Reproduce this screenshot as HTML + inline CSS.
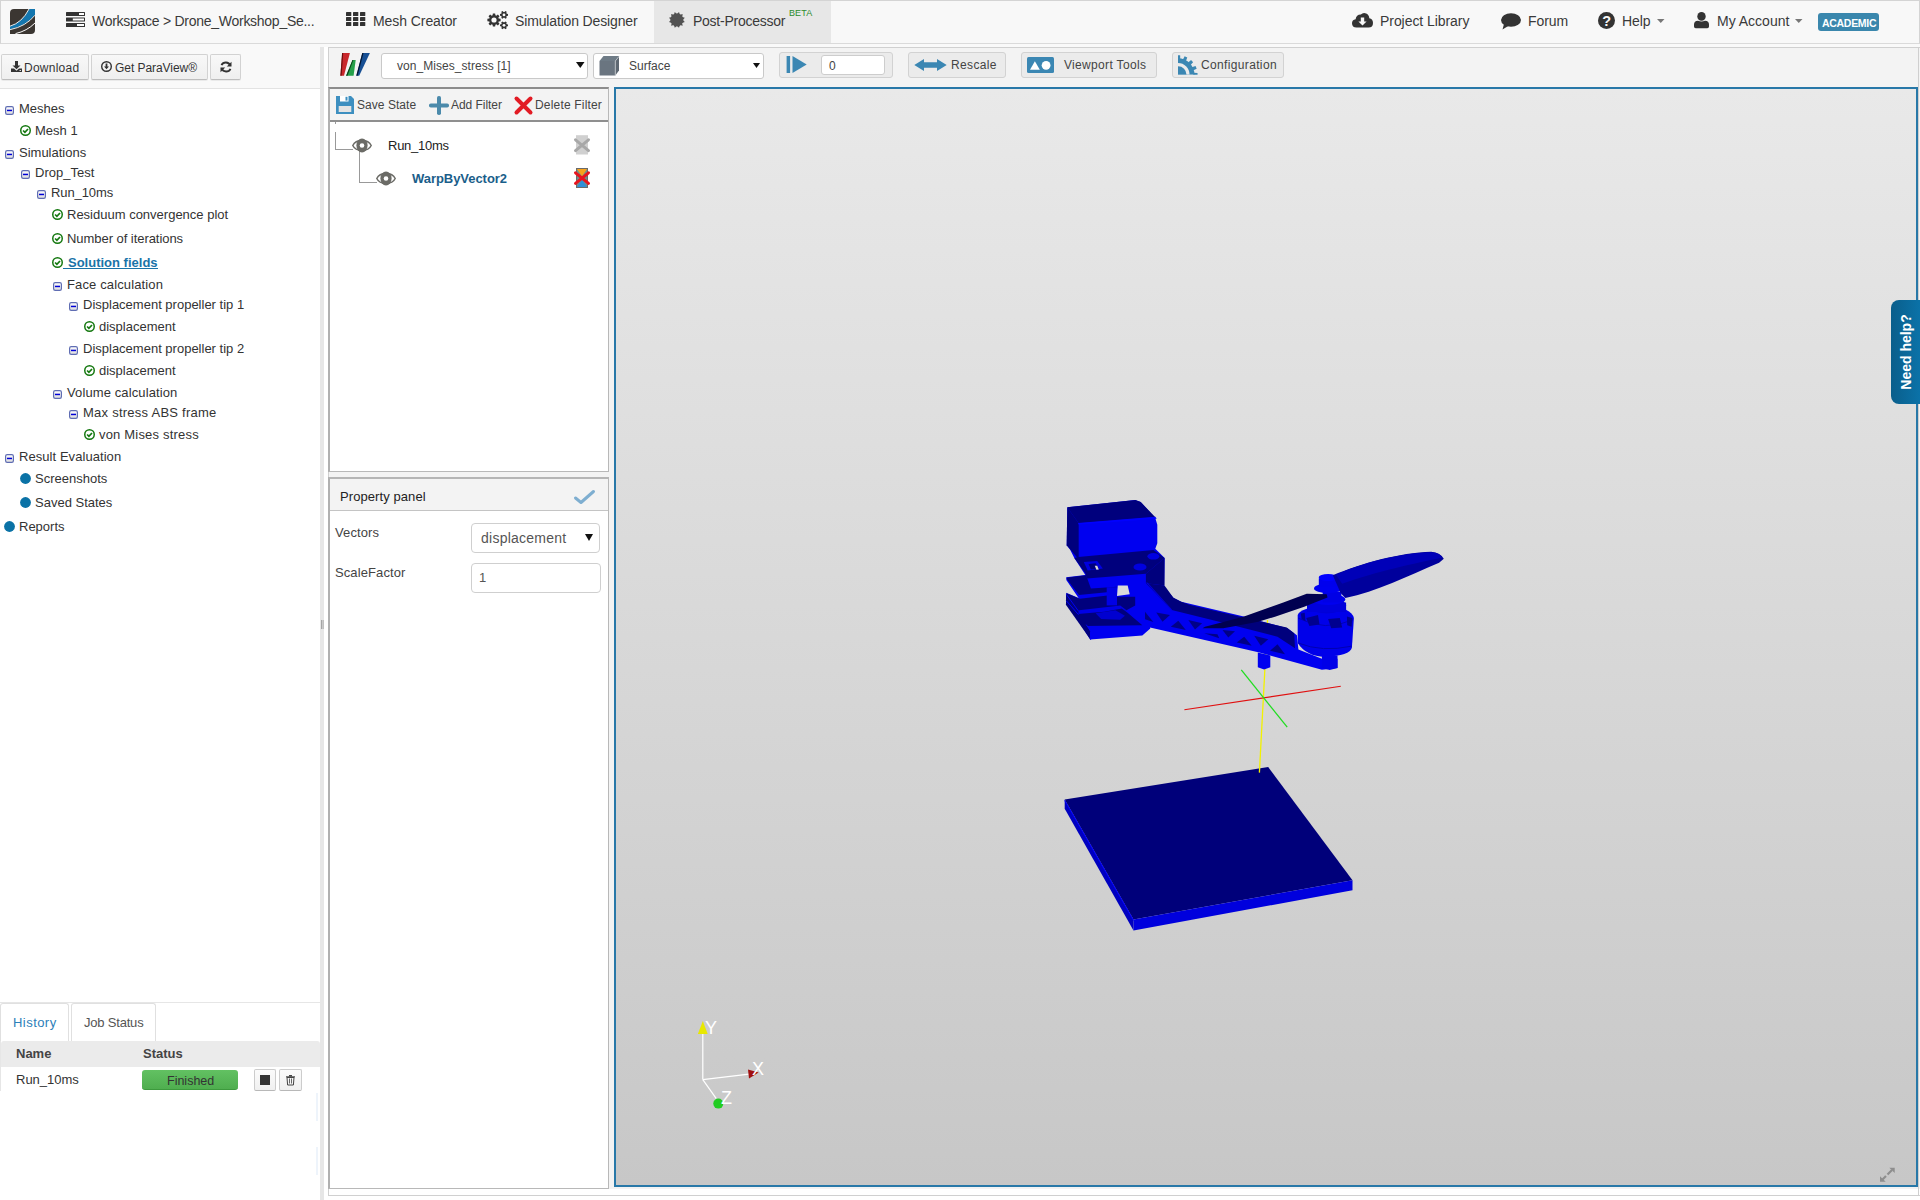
<!DOCTYPE html><html><head><meta charset="utf-8"><style>
html,body{margin:0;padding:0;width:1920px;height:1200px;overflow:hidden;background:#fff;font-family:'Liberation Sans', sans-serif;}
.t{position:absolute;white-space:nowrap;line-height:20px;font-family:'Liberation Sans', sans-serif;}
svg{overflow:visible}
</style></head><body>
<div style="position:absolute;left:0px;top:0px;width:1920px;height:44px;background:#f8f8f8;border-top:1px solid #d4d4d4;border-bottom:1px solid #dadada;border-left:1px solid #d4d4d4;border-right:1px solid #d4d4d4;box-sizing:border-box"></div>
<div style="position:absolute;left:0px;top:44px;width:1920px;height:3px;background:#f9f9f9"></div>
<div style="position:absolute;left:654px;top:1px;width:177px;height:42px;background:#e7e7e7"></div>
<svg style="position:absolute;left:10px;top:9px;" width="25" height="25" viewBox="0 0 25 25"><path d="M4 0 H25 V21 Q25 25 21 25 H0 V4 Q0 0 4 0 Z" fill="#3b3632"/>
<path d="M0 17.5 Q12 14 19.3 0 H25 V5.8 Q16 17 0 20.3 Z" fill="#1476ae"/>
<path d="M0 17.2 Q12 13.7 19.0 0" stroke="#fff" stroke-width="0.9" fill="none"/>
<path d="M0 20.7 Q16 17.4 25 6.2" stroke="#fff" stroke-width="0.9" fill="none"/>
<path d="M5.5 24.6 Q17 22 25 14" stroke="#fff" stroke-width="1" fill="none"/></svg>
<svg style="position:absolute;left:66px;top:12px;" width="19" height="15" viewBox="0 0 19 15"><rect x="0" y="0" width="19" height="4" rx="0.5" fill="#333"/><rect x="13" y="1" width="5" height="2" fill="#fff"/>
<rect x="0" y="5.5" width="19" height="4" rx="0.5" fill="#333"/><rect x="6.8" y="6.5" width="11.2" height="2" fill="#fff"/>
<rect x="0" y="11" width="19" height="4" rx="0.5" fill="#333"/><rect x="11" y="12" width="7" height="2" fill="#fff"/></svg>
<div class="t" style="left:92px;top:11px;font-size:14px;color:#3a3a3a;font-weight:normal;letter-spacing:-0.27px;">Workspace &gt; Drone_Workshop_Se...</div>
<svg style="position:absolute;left:346px;top:12px;" width="19" height="15" viewBox="0 0 19 15"><rect x="0" y="0" width="5.3" height="4" rx="0.6" fill="#333"/><rect x="7" y="0" width="5.3" height="4" rx="0.6" fill="#333"/><rect x="14" y="0" width="5.3" height="4" rx="0.6" fill="#333"/><rect x="0" y="5" width="5.3" height="4" rx="0.6" fill="#333"/><rect x="7" y="5" width="5.3" height="4" rx="0.6" fill="#333"/><rect x="14" y="5" width="5.3" height="4" rx="0.6" fill="#333"/><rect x="0" y="10" width="5.3" height="4" rx="0.6" fill="#333"/><rect x="7" y="10" width="5.3" height="4" rx="0.6" fill="#333"/><rect x="14" y="10" width="5.3" height="4" rx="0.6" fill="#333"/></svg>
<div class="t" style="left:373px;top:11px;font-size:14px;color:#3a3a3a;font-weight:normal;letter-spacing:-0.07px;">Mesh Creator</div>
<svg style="position:absolute;left:487px;top:11px;" width="22" height="18" viewBox="0 0 22 18"><polygon points="11.69,7.58 13.60,7.86 13.60,10.14 11.69,10.42 11.32,11.31 12.48,12.86 10.86,14.48 9.31,13.32 8.42,13.69 8.14,15.60 5.86,15.60 5.58,13.69 4.69,13.32 3.14,14.48 1.52,12.86 2.68,11.31 2.31,10.42 0.40,10.14 0.40,7.86 2.31,7.58 2.68,6.69 1.52,5.14 3.14,3.52 4.69,4.68 5.58,4.31 5.86,2.40 8.14,2.40 8.42,4.31 9.31,4.68 10.86,3.52 12.48,5.14 11.32,6.69" fill="#333"/><circle cx="7" cy="9" r="2.6" fill="#f8f8f8"/><polygon points="19.81,2.86 21.01,3.06 21.01,4.74 19.81,4.94 19.31,5.82 19.74,6.95 18.28,7.80 17.51,6.86 16.49,6.86 15.72,7.80 14.26,6.95 14.69,5.82 14.19,4.94 12.99,4.74 12.99,3.06 14.19,2.86 14.69,1.98 14.26,0.85 15.72,0.00 16.49,0.94 17.51,0.94 18.28,0.00 19.74,0.85 19.31,1.98" fill="#333"/><circle cx="17" cy="3.9" r="1.4" fill="#f8f8f8"/><polygon points="19.81,13.26 21.01,13.46 21.01,15.14 19.81,15.34 19.31,16.22 19.74,17.35 18.28,18.20 17.51,17.26 16.49,17.26 15.72,18.20 14.26,17.35 14.69,16.22 14.19,15.34 12.99,15.14 12.99,13.46 14.19,13.26 14.69,12.38 14.26,11.25 15.72,10.40 16.49,11.34 17.51,11.34 18.28,10.40 19.74,11.25 19.31,12.38" fill="#333"/><circle cx="17" cy="14.3" r="1.4" fill="#f8f8f8"/></svg>
<div class="t" style="left:515px;top:11px;font-size:14px;color:#3a3a3a;font-weight:normal;letter-spacing:-0.15px;">Simulation Designer</div>
<svg style="position:absolute;left:668px;top:12px;" width="17" height="16" viewBox="0 0 17 16"><polygon points="14.90,7.90 16.82,10.02 14.10,10.90 14.70,13.70 11.90,13.10 11.02,15.82 8.90,13.90 6.78,15.82 5.90,13.10 3.10,13.70 3.70,10.90 0.98,10.02 2.90,7.90 0.98,5.78 3.70,4.90 3.10,2.10 5.90,2.70 6.78,-0.02 8.90,1.90 11.02,-0.02 11.90,2.70 14.70,2.10 14.10,4.90 16.82,5.78" fill="#525252"/><circle cx="8.9" cy="7.9" r="6.4" fill="#525252"/></svg>
<div class="t" style="left:693px;top:11px;font-size:14px;color:#3a3a3a;font-weight:normal;letter-spacing:-0.25px;">Post-Processor</div>
<div class="t" style="left:789px;top:3px;font-size:9px;color:#2c8c2c;font-weight:normal;letter-spacing:0.1px;">BETA</div>
<svg style="position:absolute;left:1352px;top:12px;" width="21" height="16" viewBox="0 0 21 16"><path d="M4.5 15.5 Q0 15.5 0 11.3 Q0 7.6 3.6 7.2 Q4.2 2.6 8.8 2.4 Q11.2 0 14.2 1.4 Q17.2 2.8 17.3 6.2 Q21 7 21 11 Q21 15.5 16.5 15.5 Z" fill="#333"/>
<path d="M8.8 5.5 H12.2 V9.5 H14.6 L10.5 13.6 L6.4 9.5 H8.8 Z" fill="#f8f8f8"/></svg>
<div class="t" style="left:1380px;top:11px;font-size:14px;color:#3a3a3a;font-weight:normal;letter-spacing:-0.06px;">Project Library</div>
<svg style="position:absolute;left:1501px;top:13px;" width="20" height="17" viewBox="0 0 20 17"><ellipse cx="10" cy="7" rx="10" ry="6.8" fill="#333"/><path d="M3 11 L1.5 16.5 L8 12.5 Z" fill="#333"/></svg>
<div class="t" style="left:1528px;top:11px;font-size:14px;color:#3a3a3a;font-weight:normal;letter-spacing:-0.1px;">Forum</div>
<svg style="position:absolute;left:1598px;top:12px;" width="17" height="17" viewBox="0 0 17 17"><circle cx="8.5" cy="8.5" r="8.5" fill="#333"/><text x="8.6" y="13.6" text-anchor="middle" font-family="Liberation Sans" font-weight="bold" font-size="14.5" fill="#f8f8f8">?</text></svg>
<div class="t" style="left:1622px;top:11px;font-size:14px;color:#3a3a3a;font-weight:normal;letter-spacing:-0.1px;">Help</div>
<svg style="position:absolute;left:1657px;top:19px;" width="8" height="4" viewBox="0 0 8 4"><path d="M0 0 H7.5 L3.75 4 Z" fill="#777"/></svg>
<svg style="position:absolute;left:1694px;top:12px;" width="15" height="17" viewBox="0 0 15 17"><ellipse cx="7.5" cy="4.4" rx="4.2" ry="4.4" fill="#333"/><path d="M0 14.5 V12.5 Q0 9 4 8.8 Q7.5 10.2 11 8.8 Q15 9 15 12.5 V14.5 Q15 16.2 13.3 16.2 H1.7 Q0 16.2 0 14.5 Z" fill="#333"/></svg>
<div class="t" style="left:1717px;top:11px;font-size:14px;color:#3a3a3a;font-weight:normal;letter-spacing:0px;">My Account</div>
<svg style="position:absolute;left:1795px;top:19px;" width="8" height="4" viewBox="0 0 8 4"><path d="M0 0 H7.5 L3.75 4 Z" fill="#777"/></svg>
<div style="position:absolute;left:1818px;top:13px;width:61px;height:18px;background:#3a87ad;border-radius:3px"></div>
<div class="t" style="left:1822px;top:13px;font-size:10.5px;color:#fff;font-weight:bold;letter-spacing:-0.3px;">ACADEMIC</div>
<div style="position:absolute;left:0px;top:44px;width:320px;height:45px;background:#f9f9f9;border-bottom:1px solid #e3e3e3;box-sizing:border-box"></div>
<div style="position:absolute;left:1px;top:54px;width:88px;height:26px;background:linear-gradient(#f8f8f8,#efefef);border:1px solid #d2d2d2;border-bottom-color:#bdbdbd;border-radius:2px;box-sizing:border-box;box-shadow:0 1px 0 rgba(0,0,0,0.06)"></div>
<div style="position:absolute;left:91px;top:54px;width:117px;height:26px;background:linear-gradient(#f8f8f8,#efefef);border:1px solid #d2d2d2;border-bottom-color:#bdbdbd;border-radius:2px;box-sizing:border-box;box-shadow:0 1px 0 rgba(0,0,0,0.06)"></div>
<div style="position:absolute;left:210px;top:54px;width:31px;height:26px;background:linear-gradient(#f8f8f8,#efefef);border:1px solid #d2d2d2;border-bottom-color:#bdbdbd;border-radius:2px;box-sizing:border-box;box-shadow:0 1px 0 rgba(0,0,0,0.06)"></div>
<svg style="position:absolute;left:11px;top:61px;" width="11" height="11" viewBox="0 0 11 11"><path d="M4 0 H7 V4.5 H9.5 L5.5 8.2 L1.5 4.5 H4 Z" fill="#333"/><path d="M0 7.5 H3 L5.5 9.8 L8 7.5 H11 V11 H0 Z" fill="#333"/><rect x="8.5" y="9" width="1.5" height="1" fill="#ddd"/></svg>
<div class="t" style="left:24px;top:58px;font-size:12px;color:#333;font-weight:normal;letter-spacing:0.25px;">Download</div>
<svg style="position:absolute;left:101px;top:61px;" width="11" height="11" viewBox="0 0 11 11"><circle cx="5.5" cy="5.5" r="4.8" fill="none" stroke="#333" stroke-width="1.4"/><path d="M4.6 2.5 H6.4 V5.5 H8 L5.5 8.3 L3 5.5 H4.6 Z" fill="#333"/></svg>
<div class="t" style="left:115px;top:58px;font-size:12px;color:#333;font-weight:normal;letter-spacing:-0.05px;">Get ParaView®</div>
<svg style="position:absolute;left:220px;top:61px;" width="12" height="12" viewBox="0 0 12 12"><path d="M10.3 4.5 A4.8 4.8 0 0 0 1.5 4.2" stroke="#333" stroke-width="1.9" fill="none"/><path d="M11.5 0.8 V5.5 H6.8 Z" fill="#333"/>
<path d="M1.7 7.5 A4.8 4.8 0 0 0 10.5 7.8" stroke="#333" stroke-width="1.9" fill="none"/><path d="M0.5 11.2 V6.5 H5.2 Z" fill="#333"/></svg>
<svg width="0" height="0" style="position:absolute"><defs><linearGradient id="mg" x1="0" y1="0" x2="0" y2="1"><stop offset="0" stop-color="#fff"/><stop offset="1" stop-color="#dcdcdc"/></linearGradient></defs></svg>
<svg style="position:absolute;left:5px;top:106px;" width="9" height="9" viewBox="0 0 9 9"><rect x="0.6" y="0.6" width="7.8" height="7.8" rx="1.6" fill="url(#mg)" stroke="#5f6db3" stroke-width="1.2"/><rect x="2" y="3.7" width="5" height="1.5" fill="#0000d8"/></svg>
<div class="t" style="left:19px;top:99px;font-size:13px;color:#333;font-weight:normal;">Meshes</div>
<svg style="position:absolute;left:20px;top:125px;" width="11" height="11" viewBox="0 0 11 11"><circle cx="5.5" cy="5.5" r="4.75" fill="#fff" stroke="#14780f" stroke-width="1.5"/><path d="M3.1 5.5 L4.9 7.3 L8.0 4.0" fill="none" stroke="#14780f" stroke-width="1.7"/></svg>
<div class="t" style="left:35px;top:121px;font-size:13px;color:#333;font-weight:normal;">Mesh 1</div>
<svg style="position:absolute;left:5px;top:150px;" width="9" height="9" viewBox="0 0 9 9"><rect x="0.6" y="0.6" width="7.8" height="7.8" rx="1.6" fill="url(#mg)" stroke="#5f6db3" stroke-width="1.2"/><rect x="2" y="3.7" width="5" height="1.5" fill="#0000d8"/></svg>
<div class="t" style="left:19px;top:143px;font-size:13px;color:#333;font-weight:normal;">Simulations</div>
<svg style="position:absolute;left:21px;top:170px;" width="9" height="9" viewBox="0 0 9 9"><rect x="0.6" y="0.6" width="7.8" height="7.8" rx="1.6" fill="url(#mg)" stroke="#5f6db3" stroke-width="1.2"/><rect x="2" y="3.7" width="5" height="1.5" fill="#0000d8"/></svg>
<div class="t" style="left:35px;top:163px;font-size:13px;color:#333;font-weight:normal;">Drop_Test</div>
<svg style="position:absolute;left:37px;top:190px;" width="9" height="9" viewBox="0 0 9 9"><rect x="0.6" y="0.6" width="7.8" height="7.8" rx="1.6" fill="url(#mg)" stroke="#5f6db3" stroke-width="1.2"/><rect x="2" y="3.7" width="5" height="1.5" fill="#0000d8"/></svg>
<div class="t" style="left:51px;top:183px;font-size:13px;color:#333;font-weight:normal;letter-spacing:-0.1px;">Run_10ms</div>
<svg style="position:absolute;left:52px;top:209px;" width="11" height="11" viewBox="0 0 11 11"><circle cx="5.5" cy="5.5" r="4.75" fill="#fff" stroke="#14780f" stroke-width="1.5"/><path d="M3.1 5.5 L4.9 7.3 L8.0 4.0" fill="none" stroke="#14780f" stroke-width="1.7"/></svg>
<div class="t" style="left:67px;top:205px;font-size:13px;color:#333;font-weight:normal;">Residuum convergence plot</div>
<svg style="position:absolute;left:52px;top:233px;" width="11" height="11" viewBox="0 0 11 11"><circle cx="5.5" cy="5.5" r="4.75" fill="#fff" stroke="#14780f" stroke-width="1.5"/><path d="M3.1 5.5 L4.9 7.3 L8.0 4.0" fill="none" stroke="#14780f" stroke-width="1.7"/></svg>
<div class="t" style="left:67px;top:229px;font-size:13px;color:#333;font-weight:normal;letter-spacing:-0.05px;">Number of iterations</div>
<svg style="position:absolute;left:52px;top:257px;" width="11" height="11" viewBox="0 0 11 11"><circle cx="5.5" cy="5.5" r="4.75" fill="#fff" stroke="#14780f" stroke-width="1.5"/><path d="M3.1 5.5 L4.9 7.3 L8.0 4.0" fill="none" stroke="#14780f" stroke-width="1.7"/></svg>
<div style="position:absolute;left:63px;top:268px;width:95px;height:1px;background:#1a73a8"></div>
<div class="t" style="left:68px;top:253px;font-size:13px;color:#1a73a8;font-weight:bold;">Solution fields</div>
<svg style="position:absolute;left:53px;top:282px;" width="9" height="9" viewBox="0 0 9 9"><rect x="0.6" y="0.6" width="7.8" height="7.8" rx="1.6" fill="url(#mg)" stroke="#5f6db3" stroke-width="1.2"/><rect x="2" y="3.7" width="5" height="1.5" fill="#0000d8"/></svg>
<div class="t" style="left:67px;top:275px;font-size:13px;color:#333;font-weight:normal;letter-spacing:0.13px;">Face calculation</div>
<svg style="position:absolute;left:69px;top:302px;" width="9" height="9" viewBox="0 0 9 9"><rect x="0.6" y="0.6" width="7.8" height="7.8" rx="1.6" fill="url(#mg)" stroke="#5f6db3" stroke-width="1.2"/><rect x="2" y="3.7" width="5" height="1.5" fill="#0000d8"/></svg>
<div class="t" style="left:83px;top:295px;font-size:13px;color:#333;font-weight:normal;">Displacement propeller tip 1</div>
<svg style="position:absolute;left:84px;top:321px;" width="11" height="11" viewBox="0 0 11 11"><circle cx="5.5" cy="5.5" r="4.75" fill="#fff" stroke="#14780f" stroke-width="1.5"/><path d="M3.1 5.5 L4.9 7.3 L8.0 4.0" fill="none" stroke="#14780f" stroke-width="1.7"/></svg>
<div class="t" style="left:99px;top:317px;font-size:13px;color:#333;font-weight:normal;">displacement</div>
<svg style="position:absolute;left:69px;top:346px;" width="9" height="9" viewBox="0 0 9 9"><rect x="0.6" y="0.6" width="7.8" height="7.8" rx="1.6" fill="url(#mg)" stroke="#5f6db3" stroke-width="1.2"/><rect x="2" y="3.7" width="5" height="1.5" fill="#0000d8"/></svg>
<div class="t" style="left:83px;top:339px;font-size:13px;color:#333;font-weight:normal;">Displacement propeller tip 2</div>
<svg style="position:absolute;left:84px;top:365px;" width="11" height="11" viewBox="0 0 11 11"><circle cx="5.5" cy="5.5" r="4.75" fill="#fff" stroke="#14780f" stroke-width="1.5"/><path d="M3.1 5.5 L4.9 7.3 L8.0 4.0" fill="none" stroke="#14780f" stroke-width="1.7"/></svg>
<div class="t" style="left:99px;top:361px;font-size:13px;color:#333;font-weight:normal;">displacement</div>
<svg style="position:absolute;left:53px;top:390px;" width="9" height="9" viewBox="0 0 9 9"><rect x="0.6" y="0.6" width="7.8" height="7.8" rx="1.6" fill="url(#mg)" stroke="#5f6db3" stroke-width="1.2"/><rect x="2" y="3.7" width="5" height="1.5" fill="#0000d8"/></svg>
<div class="t" style="left:67px;top:383px;font-size:13px;color:#333;font-weight:normal;letter-spacing:0.11px;">Volume calculation</div>
<svg style="position:absolute;left:69px;top:410px;" width="9" height="9" viewBox="0 0 9 9"><rect x="0.6" y="0.6" width="7.8" height="7.8" rx="1.6" fill="url(#mg)" stroke="#5f6db3" stroke-width="1.2"/><rect x="2" y="3.7" width="5" height="1.5" fill="#0000d8"/></svg>
<div class="t" style="left:83px;top:403px;font-size:13px;color:#333;font-weight:normal;letter-spacing:0.25px;">Max stress ABS frame</div>
<svg style="position:absolute;left:84px;top:429px;" width="11" height="11" viewBox="0 0 11 11"><circle cx="5.5" cy="5.5" r="4.75" fill="#fff" stroke="#14780f" stroke-width="1.5"/><path d="M3.1 5.5 L4.9 7.3 L8.0 4.0" fill="none" stroke="#14780f" stroke-width="1.7"/></svg>
<div class="t" style="left:99px;top:425px;font-size:13px;color:#333;font-weight:normal;letter-spacing:0.19px;">von Mises stress</div>
<svg style="position:absolute;left:5px;top:454px;" width="9" height="9" viewBox="0 0 9 9"><rect x="0.6" y="0.6" width="7.8" height="7.8" rx="1.6" fill="url(#mg)" stroke="#5f6db3" stroke-width="1.2"/><rect x="2" y="3.7" width="5" height="1.5" fill="#0000d8"/></svg>
<div class="t" style="left:19px;top:447px;font-size:13px;color:#333;font-weight:normal;letter-spacing:0.06px;">Result Evaluation</div>
<svg style="position:absolute;left:20px;top:473px;" width="11" height="11" viewBox="0 0 11 11"><circle cx="5.5" cy="5.5" r="5.4" fill="#0a72a6"/></svg>
<div class="t" style="left:35px;top:469px;font-size:13px;color:#333;font-weight:normal;">Screenshots</div>
<svg style="position:absolute;left:20px;top:497px;" width="11" height="11" viewBox="0 0 11 11"><circle cx="5.5" cy="5.5" r="5.4" fill="#0a72a6"/></svg>
<div class="t" style="left:35px;top:493px;font-size:13px;color:#333;font-weight:normal;">Saved States</div>
<svg style="position:absolute;left:4px;top:521px;" width="11" height="11" viewBox="0 0 11 11"><circle cx="5.5" cy="5.5" r="5.4" fill="#0a72a6"/></svg>
<div class="t" style="left:19px;top:517px;font-size:13px;color:#333;font-weight:normal;">Reports</div>
<div style="position:absolute;left:320px;top:47px;width:4px;height:1153px;background:#e6e6e6"></div>
<svg style="position:absolute;left:321px;top:620px;" width="3" height="9" viewBox="0 0 3 9"><rect x="0" y="0" width="0.7" height="9" fill="#888"/><rect x="1.7" y="0" width="0.7" height="9" fill="#888"/></svg>
<div style="position:absolute;left:0px;top:1002px;width:320px;height:1px;background:#e6e6e6"></div>
<div style="position:absolute;left:0px;top:1003px;width:69px;height:38px;border:1px solid #e0e0e0;border-bottom:none;border-radius:3px 3px 0 0;box-sizing:border-box;background:#fff"></div>
<div style="position:absolute;left:71px;top:1003px;width:85px;height:38px;border:1px solid #e0e0e0;border-bottom:none;border-radius:3px 3px 0 0;box-sizing:border-box;background:#fff"></div>
<div class="t" style="left:13px;top:1013px;font-size:13px;color:#2c80b9;font-weight:normal;letter-spacing:0.45px;">History</div>
<div class="t" style="left:84px;top:1013px;font-size:13px;color:#555;font-weight:normal;letter-spacing:-0.2px;">Job Status</div>
<div style="position:absolute;left:1px;top:1041px;width:319px;height:26px;background:#ebebeb;border-radius:3px 3px 0 0"></div>
<div style="position:absolute;left:0px;top:1041px;width:1px;height:50px;background:#e6e6e6"></div>
<div class="t" style="left:16px;top:1044px;font-size:13px;color:#444;font-weight:bold;">Name</div>
<div class="t" style="left:143px;top:1044px;font-size:13px;color:#444;font-weight:bold;">Status</div>
<div class="t" style="left:16px;top:1070px;font-size:13px;color:#333;font-weight:normal;">Run_10ms</div>
<div style="position:absolute;left:142px;top:1070px;width:96px;height:20px;background:linear-gradient(#62c162,#4fae4f);border-radius:3px;border-bottom:1px solid #3d9a3d;box-sizing:border-box"></div>
<div class="t" style="left:167px;top:1071px;font-size:12.5px;color:#333;font-weight:normal;">Finished</div>
<div style="position:absolute;left:254px;top:1069px;width:22px;height:22px;background:linear-gradient(#fbfbfb,#f0f0f0);border:1px solid #ccc;border-bottom-color:#b8b8b8;border-radius:2px;box-sizing:border-box"></div>
<div style="position:absolute;left:260px;top:1075px;width:10px;height:10px;background:#333"></div>
<div style="position:absolute;left:279px;top:1069px;width:23px;height:22px;background:linear-gradient(#fbfbfb,#f0f0f0);border:1px solid #ccc;border-bottom-color:#b8b8b8;border-radius:2px;box-sizing:border-box"></div>
<svg style="position:absolute;left:286px;top:1075px;" width="9" height="10" viewBox="0 0 9 10"><rect x="0" y="1.3" width="9" height="1.2" fill="#444"/><rect x="3" y="0" width="3" height="1.5" fill="#444"/><path d="M1 2.5 H8 L7.4 10 H1.6 Z" fill="none" stroke="#444" stroke-width="1"/><rect x="3.2" y="3.5" width="0.8" height="5" fill="#444"/><rect x="5" y="3.5" width="0.8" height="5" fill="#444"/></svg>
<div style="position:absolute;left:316px;top:1093px;width:2px;height:28px;background:#eef4fb"></div>
<div style="position:absolute;left:316px;top:1147px;width:2px;height:28px;background:#eef4fb"></div>
<div style="position:absolute;left:328px;top:47px;width:1592px;height:1149px;border:1px solid #d0d0d0;border-right:none;box-sizing:border-box;background:#fff"></div>
<div style="position:absolute;left:329px;top:48px;width:1591px;height:1141px;background:#f3f3f3"></div>
<div style="position:absolute;left:1918px;top:47px;width:1px;height:1149px;background:#cfcfcf"></div>
<svg style="position:absolute;left:336px;top:48px;" width="40" height="32" viewBox="0 0 40 32"><path d="M6.1 4.9 H13.9 L8 27.7 H4.4 Z" fill="#c9272b"/><path d="M6.1 4.9 L4.4 27.7 H5.6 L7.2 4.9Z" fill="#6a0d0d"/>
<path d="M16.5 12 H19.7 L17.6 27.7 H10.1 Z" fill="#25a04a"/><path d="M16.5 12 L10.1 27.7 H11.5 L17.4 12Z" fill="#0b3d16"/>
<path d="M26.3 4.9 H33.9 L23.2 27.7 H20.3 Z" fill="#174f94"/><path d="M26.3 4.9 L20.3 27.7 H21.6 L27.5 4.9Z" fill="#021530"/></svg>
<div style="position:absolute;left:381px;top:53px;width:207px;height:26px;background:#fff;border:1px solid #c9c9c9;border-radius:3px;box-sizing:border-box"></div>
<div class="t" style="left:397px;top:56px;font-size:12px;color:#444;font-weight:normal;letter-spacing:0.05px;">von_Mises_stress [1]</div>
<svg style="position:absolute;left:576px;top:62px;" width="9" height="6" viewBox="0 0 9 6"><path d="M0 0 H8.5 L4.25 6 Z" fill="#111"/></svg>
<div style="position:absolute;left:593px;top:53px;width:171px;height:26px;background:#fff;border:1px solid #c9c9c9;border-radius:3px;box-sizing:border-box"></div>
<svg style="position:absolute;left:599px;top:56px;" width="20" height="20" viewBox="0 0 20 20"><path d="M0.5 5 L4.5 0 H20 L16.5 5 Z" fill="#6e7b86"/><rect x="0.5" y="5" width="15.8" height="14.5" fill="#6a7580"/><path d="M16.3 5 L20 0 V14.5 L16.3 19.5 Z" fill="#5e6872"/>
<path d="M16.3 5 L20 0.5" stroke="#c8cdd2" stroke-width="0.8"/><path d="M16.3 5 V19.5" stroke="#c8cdd2" stroke-width="0.8"/></svg>
<div class="t" style="left:629px;top:56px;font-size:12px;color:#444;font-weight:normal;">Surface</div>
<svg style="position:absolute;left:753px;top:63px;" width="7" height="5" viewBox="0 0 7 5"><path d="M0 0 H7 L3.5 5 Z" fill="#111"/></svg>
<div style="position:absolute;left:779px;top:52px;width:114px;height:26px;background:#ebebeb;border:1px solid #d2d2d2;border-radius:3px;box-sizing:border-box"></div>
<svg style="position:absolute;left:786px;top:56px;" width="21" height="17" viewBox="0 0 21 17"><rect x="0.6" y="0" width="3.5" height="17" fill="#3b87b3"/><path d="M6.5 0 L20.7 8.5 L6.5 17 Z" fill="#3b87b3"/></svg>
<div style="position:absolute;left:821px;top:55px;width:64px;height:20px;background:#fff;border:1px solid #cdcdcd;border-radius:3px;box-sizing:border-box"></div>
<div class="t" style="left:829px;top:56px;font-size:12px;color:#444;font-weight:normal;">0</div>
<div style="position:absolute;left:908px;top:52px;width:98px;height:26px;background:#ebebeb;border:1px solid #d2d2d2;border-radius:3px;box-sizing:border-box"></div>
<svg style="position:absolute;left:914px;top:59px;" width="33" height="12" viewBox="0 0 33 12"><path d="M0.3 6 L10 0 V3.2 H23 V0 L32.7 6 L23 12 V8.8 H10 V12 Z" fill="#3b87b3"/></svg>
<div class="t" style="left:951px;top:55px;font-size:12px;color:#444;font-weight:normal;letter-spacing:0.35px;">Rescale</div>
<div style="position:absolute;left:1021px;top:52px;width:136px;height:26px;background:#ebebeb;border:1px solid #d2d2d2;border-radius:3px;box-sizing:border-box"></div>
<svg style="position:absolute;left:1027px;top:57px;" width="27" height="16" viewBox="0 0 27 16"><rect x="0" y="0" width="27" height="16" rx="1.5" fill="#3b87b3"/><path d="M3 12.8 L7.9 4.3 L12.8 12.8 Z" fill="#fff"/><circle cx="19.1" cy="8.3" r="4.4" fill="#fff"/></svg>
<div class="t" style="left:1064px;top:55px;font-size:12px;color:#444;font-weight:normal;letter-spacing:0.33px;">Viewport Tools</div>
<div style="position:absolute;left:1172px;top:52px;width:112px;height:26px;background:#ebebeb;border:1px solid #d2d2d2;border-radius:3px;box-sizing:border-box"></div>
<svg style="position:absolute;left:1178px;top:55px;" width="21" height="20" viewBox="0 0 21 20"><clipPath id="cgc"><rect x="0" y="0" width="21" height="19.7"/></clipPath><g clip-path="url(#cgc)"><path d="M0 19.7 V3.2 A16.5 16.5 0 0 1 16.5 19.7 Z" fill="#3b87b3"/><path d="M0 19.7 V8.1 A11.6 11.6 0 0 1 11.6 19.7 Z" fill="#ebebeb"/><path d="M0 19.7 V11.2 A8.5 8.5 0 0 1 8.5 19.7 Z" fill="#3b87b3"/><polygon points="2.24,4.36 2.15,0.22 -0.79,0.12 -1.16,4.24" fill="#3b87b3"/><polygon points="7.82,6.32 9.29,2.44 6.61,1.25 4.71,4.93" fill="#3b87b3"/><polygon points="12.26,10.22 15.08,7.18 13.04,5.07 9.90,7.77" fill="#3b87b3"/><polygon points="14.92,15.51 18.67,13.74 17.57,11.02 13.65,12.35" fill="#3b87b3"/><polygon points="15.43,21.13 19.57,20.83 19.52,17.89 15.37,17.73" fill="#3b87b3"/></g></svg>
<div class="t" style="left:1201px;top:55px;font-size:12px;color:#444;font-weight:normal;letter-spacing:0.35px;">Configuration</div>
<div style="position:absolute;left:328px;top:87px;width:281px;height:385px;background:#fff;border-top:2px solid #8c8c8c;border-left:2px solid #b0b0b0;border-right:1px solid #b8b8b8;border-bottom:1px solid #b8b8b8;box-sizing:border-box"></div>
<div style="position:absolute;left:330px;top:89px;width:278px;height:31px;background:#f3f3f3"></div>
<div style="position:absolute;left:330px;top:120px;width:278px;height:2px;background:#8f8f8f"></div>
<svg style="position:absolute;left:336px;top:96px;" width="18" height="18" viewBox="0 0 18 18"><path d="M0 0 H15 L18 3 V18 H0 Z" fill="#3d8fc0"/><rect x="4" y="0" width="8.5" height="5.5" fill="#fff"/><rect x="9.5" y="0.8" width="2" height="3.8" fill="#3d8fc0"/><rect x="2.7" y="10" width="12.6" height="6" fill="#e4e4e4"/></svg>
<div class="t" style="left:357px;top:95px;font-size:12px;color:#444;font-weight:normal;letter-spacing:0.05px;">Save State</div>
<svg style="position:absolute;left:429px;top:96px;" width="20" height="19" viewBox="0 0 20 19"><rect x="8" y="0" width="4" height="19" rx="1.8" fill="#4b8aab"/><rect x="0" y="7.5" width="20" height="4" rx="1.8" fill="#4b8aab"/></svg>
<div class="t" style="left:451px;top:95px;font-size:12px;color:#444;font-weight:normal;letter-spacing:-0.05px;">Add Filter</div>
<svg style="position:absolute;left:514px;top:96px;" width="19" height="19" viewBox="0 0 19 19"><path d="M2.5 2.5 L16.5 16.5 M16.5 2.5 L2.5 16.5" stroke="#e21b24" stroke-width="4" stroke-linecap="round"/></svg>
<div class="t" style="left:535px;top:95px;font-size:12px;color:#444;font-weight:normal;letter-spacing:0.18px;">Delete Filter</div>
<div style="position:absolute;left:335px;top:122px;width:1px;height:2px;background:#999"></div>
<div style="position:absolute;left:335px;top:132px;width:1px;height:18px;background:#999"></div>
<div style="position:absolute;left:335px;top:149px;width:18px;height:1px;background:#999"></div>
<div style="position:absolute;left:359px;top:150px;width:1px;height:33px;background:#999"></div>
<div style="position:absolute;left:359px;top:182px;width:18px;height:1px;background:#999"></div>
<svg style="position:absolute;left:352px;top:138px;" width="20" height="15" viewBox="0 0 20 15"><path d="M0.8 7.5 C4 0.8 16 0.8 19.2 7.5 C16 14.2 4 14.2 0.8 7.5 Z" fill="#fff" stroke="#6b6b66" stroke-width="1.5"/><ellipse cx="10" cy="7.5" rx="5.6" ry="7.1" fill="#6b6b66"/><circle cx="10" cy="7.5" r="2.3" fill="#fff"/></svg>
<div class="t" style="left:388px;top:136px;font-size:13px;color:#222;font-weight:normal;letter-spacing:-0.25px;">Run_10ms</div>
<svg style="position:absolute;left:376px;top:171px;" width="20" height="15" viewBox="0 0 20 15"><path d="M0.8 7.5 C4 0.8 16 0.8 19.2 7.5 C16 14.2 4 14.2 0.8 7.5 Z" fill="#fff" stroke="#6b6b66" stroke-width="1.5"/><ellipse cx="10" cy="7.5" rx="5.6" ry="7.1" fill="#6b6b66"/><circle cx="10" cy="7.5" r="2.3" fill="#fff"/></svg>
<div class="t" style="left:412px;top:169px;font-size:13px;color:#1a5e8a;font-weight:bold;letter-spacing:-0.05px;">WarpByVector2</div>
<svg style="position:absolute;left:574px;top:135px;" width="16" height="20" viewBox="0 0 16 20"><rect x="2" y="0.2" width="12" height="19.3" fill="#d0d0d0"/><path d="M1.5 4.8 L14.5 15.6 M14.5 4.8 L1.5 15.6" stroke="#a8a8a8" stroke-width="3" stroke-linecap="round"/></svg>
<svg style="position:absolute;left:574px;top:168px;" width="16" height="20" viewBox="0 0 16 20"><rect x="2.5" y="0.5" width="11" height="19" fill="#6f8f8c" stroke="#6a6a6a" stroke-width="1"/><path d="M3 1 H13 L8 8.5 Z" fill="#f7a21b"/><path d="M3 19 H13 L8 11.5 Z" fill="#2f8fd8"/><path d="M1.5 4.8 L14.5 15.4 M14.5 4.8 L1.5 15.4" stroke="#e8141e" stroke-width="3" stroke-linecap="round"/></svg>
<div style="position:absolute;left:328px;top:477px;width:281px;height:712px;background:#fff;border-top:2px solid #b5b5b5;border-left:2px solid #b0b0b0;border-right:1px solid #b8b8b8;border-bottom:1px solid #b8b8b8;box-sizing:border-box"></div>
<div style="position:absolute;left:330px;top:479px;width:278px;height:32px;background:#f3f3f3;border-bottom:1px solid #c4c4c4;box-sizing:border-box"></div>
<div class="t" style="left:340px;top:487px;font-size:13px;color:#222;font-weight:normal;letter-spacing:0.08px;">Property panel</div>
<svg style="position:absolute;left:574px;top:490px;" width="21" height="14" viewBox="0 0 21 14"><path d="M1.5 8 L7 12.5 L19.5 1.5" fill="none" stroke="#7eaed0" stroke-width="3" stroke-linecap="round" stroke-linejoin="round"/></svg>
<div class="t" style="left:335px;top:523px;font-size:13px;color:#444;font-weight:normal;letter-spacing:0.1px;">Vectors</div>
<div style="position:absolute;left:471px;top:523px;width:129px;height:30px;background:#fff;border:1px solid #cfcfcf;border-radius:4px;box-sizing:border-box"></div>
<div class="t" style="left:481px;top:528px;font-size:14px;color:#555;font-weight:normal;letter-spacing:0.25px;">displacement</div>
<svg style="position:absolute;left:585px;top:534px;" width="8" height="7" viewBox="0 0 8 7"><path d="M0 0 H8 L4 7 Z" fill="#111"/></svg>
<div class="t" style="left:335px;top:563px;font-size:13px;color:#444;font-weight:normal;letter-spacing:0.1px;">ScaleFactor</div>
<div style="position:absolute;left:471px;top:563px;width:130px;height:30px;background:#fff;border:1px solid #cfcfcf;border-radius:4px;box-sizing:border-box"></div>
<div class="t" style="left:479px;top:568px;font-size:13px;color:#555;font-weight:normal;">1</div>
<div style="position:absolute;left:614px;top:87px;width:1304px;height:1100px;border:2px solid #2878a8;box-sizing:border-box;background:linear-gradient(#e9e9e9,#c7c7c7)"></div>
<svg style="position:absolute;left:0;top:0" width="1920" height="1200" viewBox="0 0 1920 1200"><polygon points="1064.7,799.6 1268.2,767.1 1352.5,880.2 1133.5,919.6" fill="#00007a" /><polygon points="1133.5,919.6 1352.5,880.2 1352.5,890.3 1133.5,930.6" fill="#0000dd" /><polygon points="1064.7,799.6 1133.5,919.6 1133.5,930.6 1064.7,808.7" fill="#0000c0" /><line x1="1064.7" y1="800.5" x2="1133.5" y2="920.5" stroke="#0000ff" stroke-width="1"/><line x1="1267.5" y1="620" x2="1259.4" y2="772.6" stroke="#f2f200" stroke-width="1.3"/><line x1="1184.4" y1="709.7" x2="1340.8" y2="686.3" stroke="#e01010" stroke-width="1.1"/><line x1="1241.3" y1="669.9" x2="1287.2" y2="727.2" stroke="#22dd22" stroke-width="1.3"/><polygon points="1067.3,507.3 1135.3,500.0 1140.7,502.0 1155.3,518.0 1157.3,524.7 1157.3,543.3 1155.3,548.7 1164.7,558.0 1164.1,586.9 1173.4,597.8 1181.2,601.7 1243.8,616.6 1287.5,628.3 1296.9,635.3 1298.4,649.4 1321.9,658.8 1337.5,658.8 1337.5,668.1 1321.9,669.7 1259.4,652.5 1150.0,627.5 1150.3,628.4 1142.3,635.5 1090.1,639.5 1066.3,600.7 1066.3,592.8 1078.6,597.9 1066.3,580.1 1066.3,577.3 1085.3,574.9 1074.3,557.9 1070.3,550.0 1066.7,545.3" fill="#0000f0" /><polygon points="1067.3,507.3 1135.3,500.0 1140.7,502.0 1155.3,517.3 1078.7,523.3" fill="#00007d" /><polygon points="1067.3,507.3 1078.7,523.3 1078.7,559.3 1066.7,545.3" fill="#00007d" /><polygon points="1078.0,523.1 1155.3,516.7 1156.7,518.7 1078.7,524.4" fill="#0000ff" /><polygon points="1074.3,557.9 1078.2,557.1 1153.4,550.0 1164.5,557.9 1145.9,573.8 1086.9,578.5 1085.3,573.0" fill="#00007d" /><ellipse cx="1140.0" cy="567.0" rx="6.5" ry="3.6" fill="#0000e0"/><ellipse cx="1153.4" cy="556.3" rx="6" ry="3.3" fill="#0000e0"/><polygon points="1083.8,561.9 1097.2,561.1 1102.8,568.6 1087.7,570.6" fill="#0000e0" /><polygon points="1088.5,563.9 1095.6,563.3 1098.8,568.2 1090.9,569.4" fill="#00007d" /><polygon points="1094.8,565.8 1097.2,565.8 1098.8,569.4 1096.4,569.8" fill="#dadada" /><polygon points="1145.9,573.8 1164.5,557.9 1164.5,585.6 1145.9,583.3" fill="#00007d" /><polygon points="1145.9,583.3 1164.5,585.6 1173.4,597.8 1181.2,601.7 1190.0,605.0 1240.0,616.7 1286.7,627.5 1294.2,633.3 1295.0,648.3 1277.5,636.7 1219.2,621.7 1171.7,610.0 1152.5,590.0" fill="#00007d" /><polygon points="1145.9,582.5 1147.5,582.5 1171.7,609.2 1171.7,610.8" fill="#0000d8" /><polygon points="1066.3,577.7 1086.1,575.3 1090.9,588.4 1117.0,586.8 1117.0,591.2 1079.0,595.1 1067.5,580.1" fill="#00007d" /><polygon points="1066.3,593.2 1079.8,598.7 1107.5,595.5 1117.8,596.7 1135.2,596.7 1135.2,605.4 1126.5,610.2 1079.0,611.0 1066.3,600.7" fill="#00007d" /><polygon points="1106.7,587.2 1117.0,587.2 1117.0,605.4 1106.7,605.4" fill="#0000e6" /><polygon points="1079.0,610.2 1107.5,607.0 1120.2,605.4 1126.5,610.2 1120.2,613.3 1079.8,613.3" fill="#0000e6" /><polygon points="1077.4,614.1 1104.3,611.8 1121.8,608.6 1127.3,612.5 1142.3,625.2 1086.1,626.0 1080.6,618.1" fill="#00007d" /><polygon points="1095.6,613.3 1115.4,610.2 1124.9,615.7 1120.2,619.7 1101.2,618.9" fill="#0000d0" /><polygon points="1066.1,600.4 1078.5,614.3 1086.3,624.7 1090.6,631.2 1090.6,639.8 1065.9,604.7" fill="#00007d" /><polygon points="1066.1,593.9 1078.5,610.8 1078.5,614.3 1066.1,600.2" fill="#00007d" /><polyline points="1066.3,600.8 1078.5,614.7" stroke="#0000ff" stroke-width="0.9" fill="none"/><polyline points="1066.3,594.3 1078.5,611.2" stroke="#0000ff" stroke-width="0.9" fill="none"/><polyline points="1086.3,624.7 1090.6,631.2 1090.6,639.8" stroke="#0000ff" stroke-width="0.9" fill="none"/><polygon points="1117.8,585.6 1127.7,585.6 1129.7,594.3 1117.0,595.9" fill="#dadada" /><polygon points="1145.0,611.7 1145.0,619.2 1153.3,622.1" fill="#000088" /><polygon points="1156.2,612.5 1170.0,615.0 1162.5,621.7" fill="#000088" /><polygon points="1178.3,620.8 1185.8,630.0 1170.8,626.7" fill="#000088" /><polygon points="1188.3,620.0 1202.1,623.3 1195.0,629.6" fill="#000088" /><polygon points="1204.2,633.3 1217.5,634.2 1219.2,638.3" fill="#000088" /><polygon points="1222.5,630.0 1235.0,631.2 1228.3,637.5" fill="#000088" /><polygon points="1244.2,636.7 1251.7,645.8 1236.7,642.5" fill="#000088" /><polygon points="1254.2,635.8 1268.3,639.2 1260.8,645.8" fill="#000088" /><polygon points="1277.5,644.2 1285.0,654.2 1270.0,650.8" fill="#000088" /><polygon points="1257.8,652.5 1270.3,655.6 1270.3,667.3 1264.1,669.4 1257.8,667.3" fill="#0000f0" /><polygon points="1321.9,655.6 1337.5,655.6 1337.5,668.1 1329.7,670.0 1321.9,668.1" fill="#0000e8" /><path d="M1297.7 615.0 L1297.7 643.1 Q1306.2 656.4 1325.0 656.9 Q1350.0 655.6 1351.9 647.8 L1353.9 618.1 Q1351.6 607.2 1326.6 606.4 Q1300.0 607.2 1297.7 615.0 Z" fill="#0000ea"/><path d="M1298.4 643.1 Q1321.9 652.5 1351.6 646.2" stroke="#0000b0" stroke-width="1" fill="none"/><path d="M1298.1 618.1 Q1325.0 632.2 1353.1 619.7" stroke="#0000b8" stroke-width="1" fill="none"/><polygon points="1306.2,618.1 1318.0,615.0 1319.5,624.4 1309.4,625.9" fill="#000090" /><polygon points="1328.1,618.9 1339.8,618.1 1342.2,627.5 1331.2,628.3" fill="#000090" /><polygon points="1346.9,616.6 1352.3,618.1 1351.6,626.7 1347.2,625.2" fill="#000090" /><polygon points="1300.8,613.4 1304.7,612.7 1305.5,621.2 1301.6,618.9" fill="#000090" /><ellipse cx="1326.6" cy="605.6" rx="19.5" ry="7.8" fill="#0000d8"/><polygon points="1307.0,602.5 1346.1,602.5 1346.1,611.9 1307.0,611.9" fill="#0000dc" /><ellipse cx="1328.1" cy="599.4" rx="17.2" ry="5.5" fill="#0000f0"/><polygon points="1322.7,591.6 1341.4,591.6 1341.4,602.5 1322.7,602.5" fill="#0000e6" /><ellipse cx="1328.1" cy="588.4" rx="14.1" ry="4.7" fill="#0000f0"/><polygon points="1318.8,578.3 1337.5,578.3 1338.3,586.9 1318.8,586.9" fill="#0000ee" /><ellipse cx="1328.1" cy="577.5" rx="9.4" ry="3.4" fill="#0000ff"/><path d="M1332.8,575.2 C1360.9,563.4 1400.0,552.5 1431.2,551.7 Q1440.6,552.5 1443.8,558.8 L1439.1,562.7 C1407.8,575.9 1376.6,591.6 1345.3,598.1 L1340.6,593.1 Z" fill="#00009c"/><path d="M1335.9,574.7 C1360.9,563.4 1400.0,552.8 1431.2,552.2 Q1439.8,552.8 1442.2,557.5 C1415.6,563.4 1376.6,571.2 1342.2,583.8 Z" fill="#0000b8"/><polygon points="1306.7,593.8 1326.7,594.2 1327.5,597.5 1304.2,606.7 1275.0,616.7 1258.3,621.7 1223.3,628.3 1202.5,628.3 1205.0,626.7 1243.3,616.7 1283.3,602.5" fill="#000050" /><line x1="702.8" y1="1079.6" x2="702.8" y2="1034" stroke="#ffffff" stroke-width="1.2"/><line x1="702.8" y1="1079.6" x2="749" y2="1074.2" stroke="#ffffff" stroke-width="1.2"/><line x1="702.8" y1="1079.6" x2="716.3" y2="1098.6" stroke="#ffffff" stroke-width="1.2"/><polygon points="702.8,1021 697.9,1034 707.7,1034" fill="#e8e800" /><polygon points="748,1069.5 758.6,1072.6 749,1078.5" fill="#a01010" /><circle cx="718.3" cy="1103.6" r="5" fill="#22cc22"/></svg>
<div class="t" style="left:705px;top:1018px;font-size:18px;color:#fff;font-weight:normal;">Y</div>
<div class="t" style="left:752px;top:1059px;font-size:18px;color:#fff;font-weight:normal;">X</div>
<div class="t" style="left:721px;top:1088px;font-size:18px;color:#fff;font-weight:normal;">Z</div>
<svg style="position:absolute;left:1878px;top:1165px;" width="19" height="19" viewBox="0 0 19 19"><path d="M3.5 15.5 L8 11 M9.5 9.5 L14 5" stroke="#8e8e8e" stroke-width="2.2"/><path d="M11.3 2.7 H16.7 V8 Z M2 11.3 V16.7 H7.7 Z" fill="#8e8e8e"/></svg>
<div style="position:absolute;left:1891px;top:300px;width:29px;height:104px;background:linear-gradient(90deg,#0a5e8b,#0b72a8);border-radius:8px 0 0 8px"></div>
<div class="t" style="left:1905.5px;top:352px;font-size:14px;color:#fff;font-weight:bold;transform:translate(-50%,-50%) rotate(-90deg);line-height:16px">Need help?</div>
</body></html>
